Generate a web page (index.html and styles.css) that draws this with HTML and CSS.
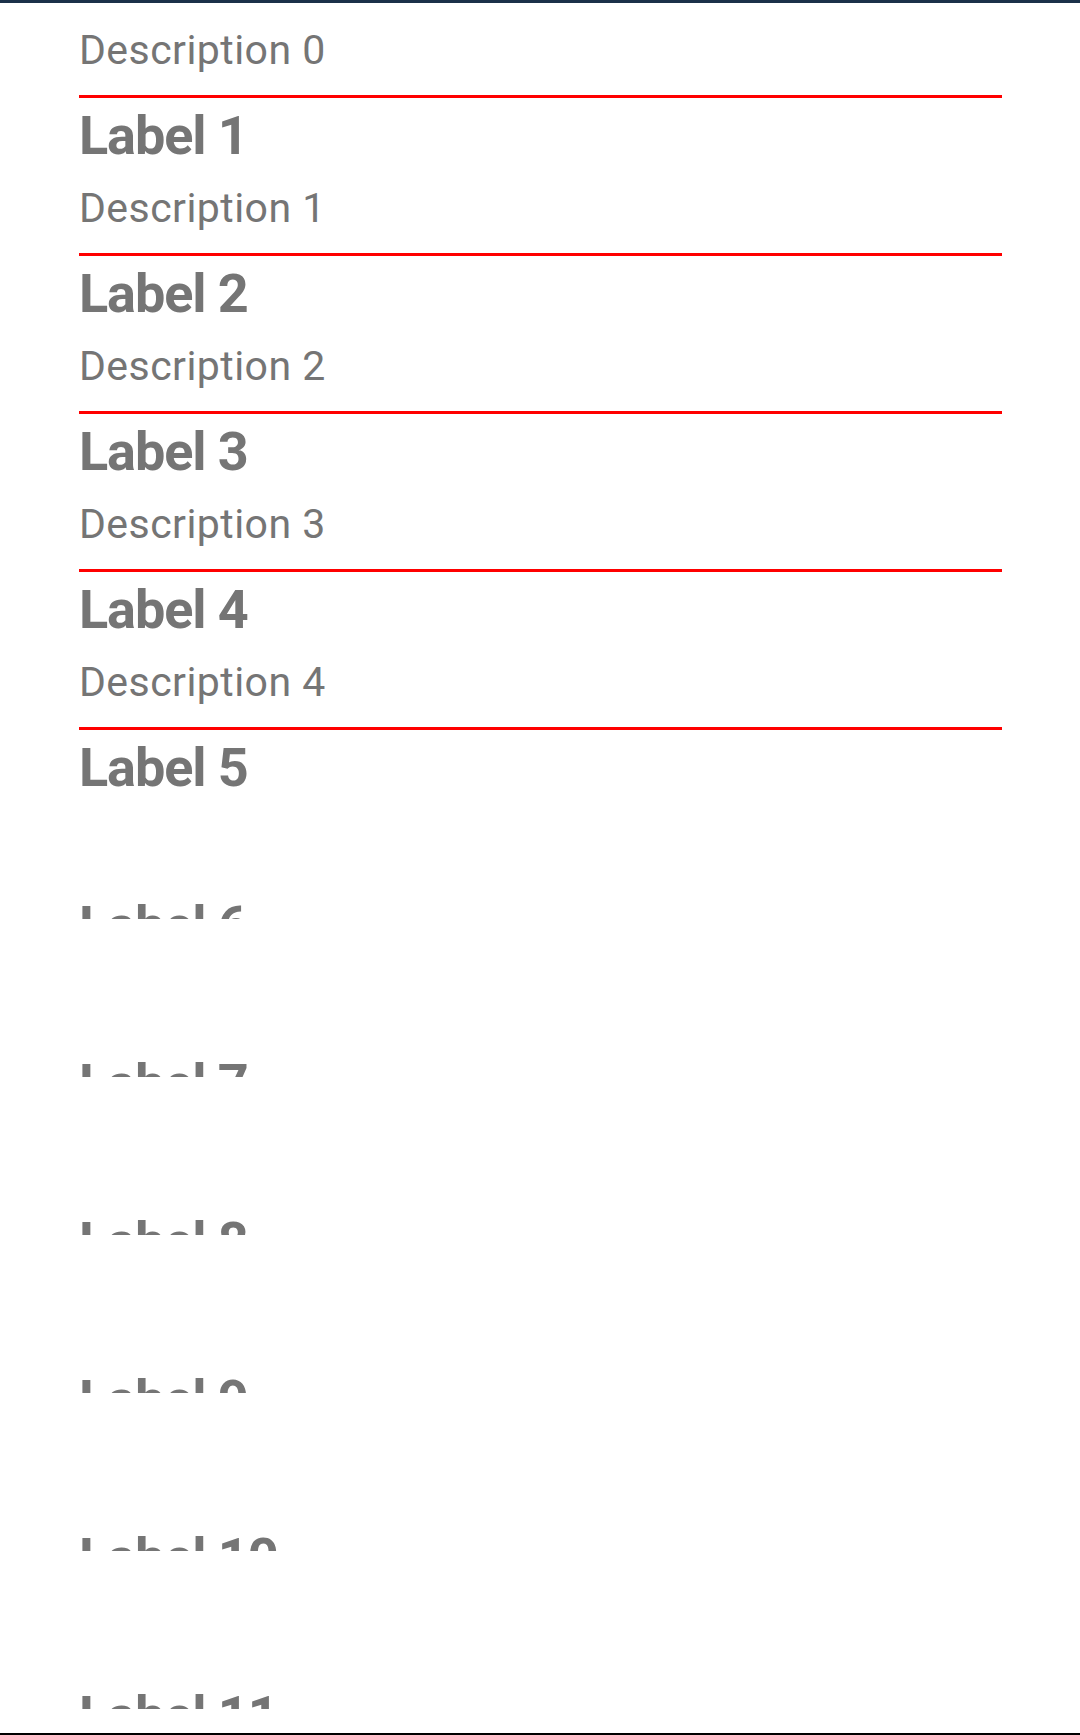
FILE: index.html
```html
<!DOCTYPE html>
<html lang="en">
<head>
<meta charset="utf-8">
<title>List</title>
<link rel="stylesheet" href="styles.css">
</head>
<body>
<div class="topbar"></div>
<div class="viewport">
  <ul class="list">
    <li class="row"><div class="cell"><div class="label">Label 0</div><div class="desc">Description 0</div></div></li>
    <li class="row"><div class="cell"><div class="label">Label 1</div><div class="desc">Description 1</div></div></li>
    <li class="row"><div class="cell"><div class="label">Label 2</div><div class="desc">Description 2</div></div></li>
    <li class="row"><div class="cell"><div class="label">Label 3</div><div class="desc">Description 3</div></div></li>
    <li class="row"><div class="cell"><div class="label">Label 4</div><div class="desc">Description 4</div></div></li>
    <li class="row"><div class="cell cell--partial"><div class="label">Label 5</div><div class="desc">Description 5</div></div></li>
    <li class="row"><div class="cell cell--collapsed"><div class="label">Label 6</div><div class="desc">Description 6</div></div></li>
    <li class="row"><div class="cell cell--collapsed"><div class="label">Label 7</div><div class="desc">Description 7</div></div></li>
    <li class="row"><div class="cell cell--collapsed"><div class="label">Label 8</div><div class="desc">Description 8</div></div></li>
    <li class="row"><div class="cell cell--collapsed"><div class="label">Label 9</div><div class="desc">Description 9</div></div></li>
    <li class="row"><div class="cell cell--collapsed"><div class="label">Label 10</div><div class="desc">Description 10</div></div></li>
    <li class="row"><div class="cell cell--collapsed"><div class="label">Label 11</div><div class="desc">Description 11</div></div></li>
  </ul>
</div>
<div class="bottombar"></div>
</body>
</html>
```

FILE: styles.css
```css
* { box-sizing: border-box; }
html, body {
  margin: 0;
  padding: 0;
  background: #ffffff;
  font-family: Roboto, "Noto Sans", "Liberation Sans", sans-serif;
}
body {
  width: 1080px;
  height: 1735px;
  overflow: hidden;
  display: flex;
  flex-direction: column;
}
.topbar {
  height: 3px;
  background: #1b3149;
  flex: none;
}
.viewport {
  height: 1730px;
  overflow: hidden;
  flex: none;
}
.bottombar {
  height: 2px;
  background: #000000;
  flex: none;
}
.list {
  list-style: none;
  margin: -63px 0 0 0;
  padding: 0;
}
.row {
  height: 158px;
  margin: 0 78px 0 79px;
}
.cell {
  height: 158px;
  padding: 6px 0 0 0;
  border-bottom: 3px solid #ff0000;
  overflow: hidden;
  color: #757575;
}
.cell--partial {
  height: 80px;
  border-bottom: none;
}
.cell--collapsed {
  height: 31px;
  border-bottom: none;
}
.label {
  font-size: 54px;
  font-weight: 700;
  line-height: 64px;
  letter-spacing: -1.1px;
  white-space: nowrap;
}
.desc {
  margin-top: 17px;
  font-size: 41px;
  font-weight: 400;
  line-height: 47px;
  letter-spacing: 0.45px;
  white-space: nowrap;
}
```
